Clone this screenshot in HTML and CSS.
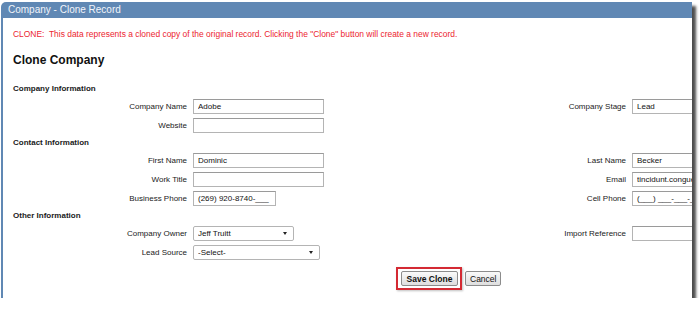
FILE: index.html
```html
<!DOCTYPE html>
<html lang="en">
<head>
  <meta charset="UTF-8" />
  <title>Company - Clone Record</title>
  <link rel="stylesheet" href="styles.css">
</head>
<body>
  <div class="dialog">
    <div class="title">Company - Clone Record</div>
    <div class="content">
      <p class="notice">CLONE:&nbsp; This data represents a cloned copy of the original record. Clicking the "Clone" button will create a new record.</p>
      <h2>Clone Company</h2>

      <div class="section">Company Information</div>
      <div class="row">
        <label>Company Name</label>
        <div><input class="txt" value="Adobe"></div>
        <label>Company Stage</label>
        <div><input class="txt" value="Lead"></div>
      </div>
      <div class="row">
        <label>Website</label>
        <div><input class="txt" value=""></div>
      </div>

      <div class="section">Contact Information</div>
      <div class="row">
        <label>First Name</label>
        <div><input class="txt" value="Dominic"></div>
        <label>Last Name</label>
        <div><input class="txt" value="Becker"></div>
      </div>
      <div class="row">
        <label>Work Title</label>
        <div><input class="txt" value=""></div>
        <label>Email</label>
        <div><input class="txt" value="tincidunt.congue@adobe.com"></div>
      </div>
      <div class="row">
        <label>Business Phone</label>
        <div><input class="txt phone" value="(269) 920-8740-___"></div>
        <label>Cell Phone</label>
        <div><input class="txt" value="(___) ___-___-___"></div>
      </div>

      <div class="section">Other Information</div>
      <div class="row">
        <label>Company Owner</label>
        <div><span class="select owner"><select><option>Jeff Truitt</option></select></span></div>
        <label>Import Reference</label>
        <div><input class="txt ref" value=""></div>
      </div>
      <div class="row">
        <label>Lead Source</label>
        <div><span class="select source"><select><option>-Select-</option></select></span></div>
      </div>

      <div class="actions">
        <span class="highlight"><button class="btn primary">Save Clone</button></span>
        <button class="btn">Cancel</button>
      </div>
    </div>
  </div>
</body>
</html>
```

FILE: styles.css
```css
* { margin: 0; padding: 0; box-sizing: border-box; }
body {
  background: #fff;
  font-family: 'Liberation Sans', Arial, sans-serif;
  font-size: 8px;
  color: #1a1a1a;
}
.dialog {
  margin: 2px 0 0 1px;
  width: 691px;
  height: 296px;
  background: #fff;
  border-radius: 5px 0 0 0;
  overflow: hidden;
  box-shadow: 4px 4px 3px rgba(0, 0, 0, 0.7);
}
.title {
  height: 16px;
  line-height: 15px;
  padding-left: 7px;
  background: #6088b4;
  color: #f2f5fa;
  font-size: 10px;
}
.content {
  height: 280px;
  border-left: 2px solid #6088b4;
  padding-left: 10px;
  overflow: hidden;
}
.notice {
  margin-top: 11px;
  line-height: 10px;
  font-size: 8.45px;
  color: #ec2530;
  white-space: nowrap;
}
h2 {
  margin-top: 14px;
  line-height: 14px;
  font-size: 12px;
  color: #111;
}
.section {
  height: 16px;
  line-height: 16px;
  font-weight: bold;
  color: #1a1a1a;
}
h2 + .section { margin-top: 14px; }
.row {
  display: grid;
  grid-template-columns: 174px 200px 227px 200px;
  column-gap: 6px;
  align-items: center;
  height: 19px;
}
.row label {
  text-align: right;
  white-space: nowrap;
  color: #1a1a1a;
}
.txt {
  display: block;
  width: 131px;
  height: 15px;
  padding: 0 4px;
  border: 1px solid #b4b4b4;
  border-top-color: #9a9a9a;
  font-family: 'Liberation Sans', Arial, sans-serif;
  font-size: 8px;
  color: #111;
  background: #fff;
}
.phone { width: 83px; }
.ref { width: 61px; }
.select {
  display: block;
  position: relative;
  height: 15px;
}
.select select {
  appearance: none;
  -webkit-appearance: none;
  width: 100%;
  height: 15px;
  padding: 0 4px;
  border: 1px solid #b4b4b4;
  border-radius: 2px;
  background: #fff;
  font-family: 'Liberation Sans', Arial, sans-serif;
  font-size: 8px;
  color: #111;
}
.select::after {
  content: '';
  position: absolute;
  right: 7px;
  top: 6px;
  border-left: 2.5px solid transparent;
  border-right: 2.5px solid transparent;
  border-top: 3px solid #222;
}
.owner { width: 101px; }
.source { width: 127px; }
.actions {
  margin-top: 5px;
  padding-left: 383px;
  display: flex;
  align-items: center;
  gap: 3px;
}
.highlight {
  display: inline-flex;
  padding: 2px 2px 2px 3px;
  border: 2px solid #d42a33;
  box-shadow: 1px 1px 2px rgba(0, 0, 0, 0.25);
}
.btn {
  height: 15px;
  padding: 0 4px;
  border: 1px solid #8c8c8c;
  border-radius: 2px;
  background: linear-gradient(#fafafa, #dedede);
  font-family: 'Liberation Sans', Arial, sans-serif;
  font-size: 8.5px;
  color: #111;
}
.primary {
  width: 57px;
  font-weight: bold;
}
```
